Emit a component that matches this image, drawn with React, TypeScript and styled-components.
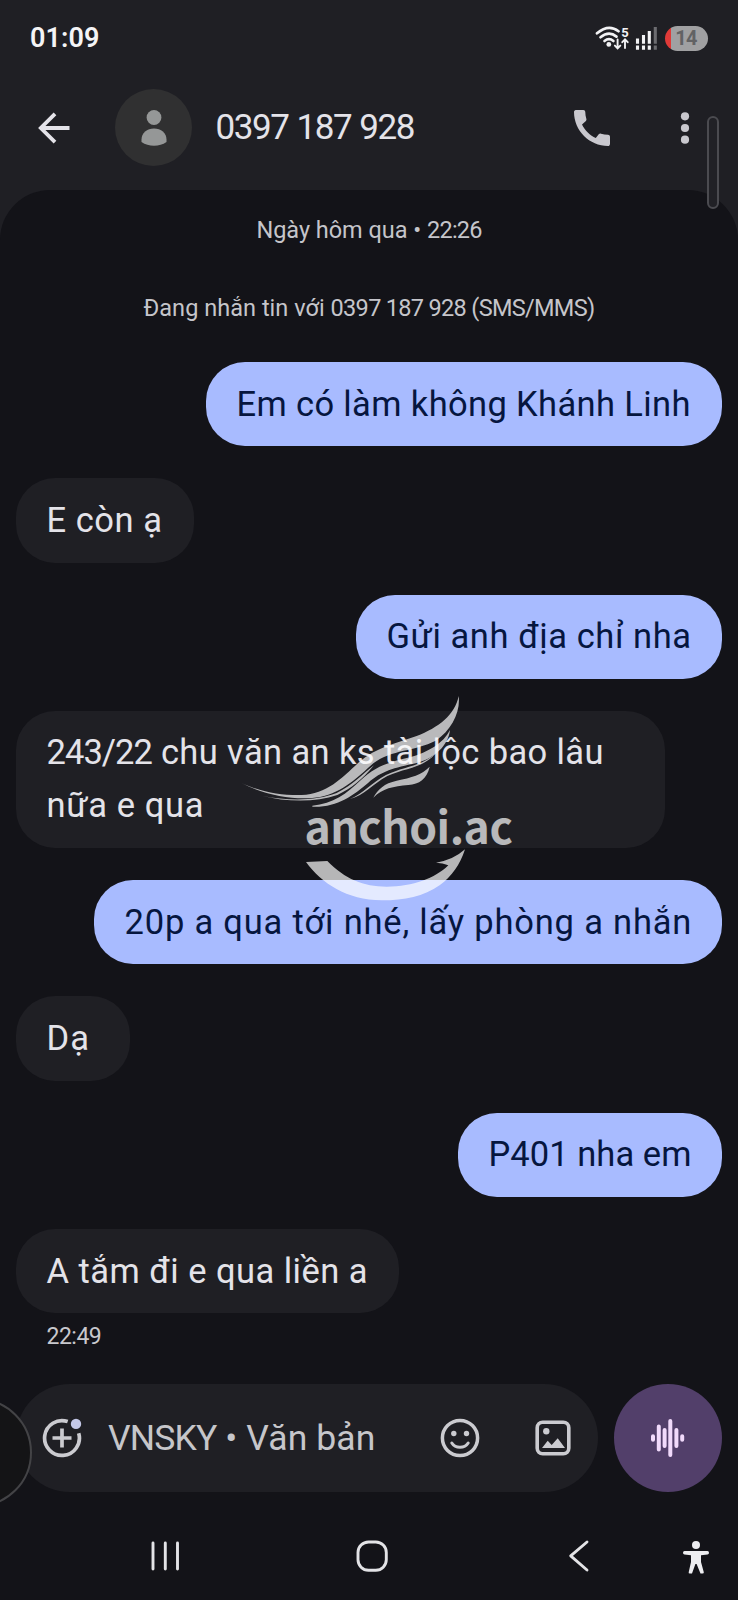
import React from 'react';
import styled, { createGlobalStyle } from 'styled-components';

const GlobalStyle = createGlobalStyle`
  * { box-sizing: border-box; }
  body { margin: 0; background: #131318; }
  svg { display: block; flex: none; }
`;

const Screen = styled.div`
  position: relative;
  display: flex;
  flex-direction: column;
  width: 738px;
  height: 1600px;
  overflow: hidden;
  background: #1f1f24;
  color: #e4e3e9;
  font-family: Roboto, 'Liberation Sans', sans-serif;
  white-space: nowrap;
`;

const StatusBar = styled.div`
  display: flex;
  align-items: center;
  justify-content: space-between;
  height: 76px;
  padding: 0 30.5px 0 30px;
`;

const Clock = styled.span`
  font-size: 27px;
  font-weight: 600;
  letter-spacing: 0.1px;
  color: #f4f4f6;
`;

const StatusIcons = styled.div`
  display: flex;
  align-items: center;
`;

const Battery = styled.div`
  display: flex;
  align-items: center;
  justify-content: center;
  width: 43px;
  height: 25px;
  margin-left: 6px;
  border-radius: 13px;
  background: linear-gradient(90deg, #e03a38 6px, #a0a0a2 6px);
  color: #626264;
  font-size: 20px;
  font-weight: 700;
  letter-spacing: -0.8px;
`;

const Header = styled.header`
  display: flex;
  align-items: center;
  height: 113.5px;
  padding: 0 16px 10px 36px;
`;

const Avatar = styled.div`
  display: flex;
  align-items: center;
  justify-content: center;
  width: 77px;
  height: 77px;
  margin: 0 23.5px 0 43px;
  border-radius: 50%;
  background: #303031;
`;

const Title = styled.h1`
  flex: 1;
  margin: 0;
  font-size: 35px;
  font-weight: 400;
  letter-spacing: -1.45px;
  word-spacing: 0.9px;
`;

const Thread = styled.main`
  display: flex;
  flex-direction: column;
  flex: 1;
  padding: 23px 16px 0;
  border-radius: 50px 50px 0 0;
  background: #131318;
`;

const Note = styled.div<{ $gap: number }>`
  height: 34px;
  margin-bottom: ${p => p.$gap}px;
  line-height: 34px;
  text-align: center;
  font-size: 23.5px;
  color: #c5c5ca;
`;

const Run = styled.span<{ $tracking: number }>`
  letter-spacing: ${p => p.$tracking}px;
`;

const Messages = styled.div`
  display: flex;
  flex-direction: column;
  gap: 32px;
`;

const Bubble = styled.div<{ $mine?: boolean; $width: number; $tracking: number }>`
  align-self: ${p => (p.$mine ? 'flex-end' : 'flex-start')};
  width: ${p => p.$width}px;
  padding: 15.65px 0 15.65px 30.5px;
  border-radius: 39px;
  background: ${p => (p.$mine ? '#a8bbff' : '#1f1f24')};
  color: ${p => (p.$mine ? '#06163f' : '#e4e3e9')};
  font-size: 34.5px;
  font-weight: 370;
  line-height: 53px;
  letter-spacing: ${p => p.$tracking}px;
`;

const Stamp = styled.div`
  margin: 6.5px 0 0 30.5px;
  font-size: 23px;
  line-height: 34px;
  letter-spacing: -0.5px;
  color: #c8c8cd;
`;

const Footer = styled.footer`
  display: flex;
  align-items: center;
  justify-content: space-between;
  height: 108px;
  margin: 0 16px 0 16px;
`;

const Composer = styled.div`
  display: flex;
  align-items: center;
  width: 582px;
  height: 108px;
  padding: 0 27px 0 26px;
  border-radius: 54px;
  background: #1f1f24;
`;

const Placeholder = styled.span`
  flex: 1;
  margin-left: 26px;
  font-size: 35.5px;
  font-weight: 370;
  color: #c6c6ca;
`;

const VoiceButton = styled.button`
  display: flex;
  align-items: center;
  justify-content: center;
  width: 108px;
  height: 108px;
  padding: 0;
  border: 0;
  border-radius: 50%;
  background: #523f6a;
`;

const Bottom = styled.div`
  display: flex;
  flex-direction: column;
  height: 216px;
  background: #131318;
`;

const NavBar = styled.nav`
  display: flex;
  align-items: center;
  height: 108px;
  padding: 19px 27px 0 149px;
`;

const Spacer = styled.div<{ $w: number }>`
  width: ${p => p.$w}px;
`;

const ScrollHandle = styled.div`
  position: absolute;
  left: 707px;
  top: 116px;
  width: 12px;
  height: 93px;
  border: 2px solid #4b4b50;
  border-radius: 6px;
  background: #212126;
`;

const EdgeHandle = styled.div`
  position: absolute;
  left: -77px;
  top: 1398px;
  width: 109px;
  height: 109px;
  border: 2px solid #434346;
  border-radius: 50%;
  background: #141416;
`;

const Watermark = styled.div`
  position: absolute;
  left: 230px;
  top: 680px;
  width: 300px;
  height: 240px;
  opacity: 0.69;
  color: #fff;
`;

const WatermarkText = styled.div`
  position: absolute;
  left: 74.5px;
  top: 114.5px;
  font: 700 44.5px/60px 'Noto Sans CJK SC', 'Noto Sans', sans-serif;
  letter-spacing: -0.5px;
`;

const Wifi = () => (
  <svg width="34" height="28" viewBox="595 24 34 28" fill="none" stroke="#f2f2f4" strokeWidth="2.7" strokeLinecap="round">
    <path d="M597 33.3Q608.5 23.5 618.5 31.2" />
    <path d="M600.5 37.2Q609 30.3 616.5 36.6" />
    <path d="M604.5 41Q609 37.4 613.4 41" />
    <circle cx="608.8" cy="44.4" r="2.4" fill="#f2f2f4" stroke="none" />
    <path d="M617.6 39.5V48M614.9 45.6l2.7 2.8 2.7-2.8M625 48V39.6M622.3 42.2l2.7-2.8 2.7 2.8" strokeWidth="1.9" />
    <text x="621.2" y="36.5" fontSize="13" fontWeight="700" fill="#f2f2f4" stroke="none">5</text>
  </svg>
);

const Signal = () => (
  <svg width="24" height="28" viewBox="635 24 24 28" strokeWidth="3.1" stroke="#f2f2f4">
    <path d="M637.5 38.5V43.8M643.5 35V43.8M649.3 31V43.8" />
    <path d="M637.5 45.6V49.8M643.5 45.6V49.8M649.3 45.6V49.8" />
    <path d="M655.3 27V43.8M655.3 45.6V49.8" stroke="#6c6c70" />
  </svg>
);

export default function App() {
  return (
    <Screen>
      <GlobalStyle />
      <StatusBar>
        <Clock>01:09</Clock>
        <StatusIcons>
          <Wifi />
          <Spacer $w={6} />
          <Signal />
          <Battery>14</Battery>
        </StatusIcons>
      </StatusBar>

      <Header>
        <svg width="36" height="36" viewBox="0 0 36 36" fill="none" stroke="#e4e3e9" strokeWidth="3.8">
          <path d="M33.500 18H5.500M19 3.800L4.800 18l14.200 14.200" />
        </svg>
        <Avatar>
          <svg width="26" height="38" viewBox="0 0 26 38" fill="#959797">
            <circle cx="13" cy="8.500" r="7.400" />
            <path d="M.5 33V30.500C.5 24 6 19.500 13 19.500S25.500 24 25.500 30.500V33Q20 36.800 13 36.800T.5 33Z" />
          </svg>
        </Avatar>
        <Title>0397 187 928</Title>
        <svg width="36" height="36" viewBox="3 3 18 18" fill="#c9c8ce">
          <path d="M20.010 15.380c-1.230 0-2.420-.200-3.530-.560-.350-.120-.740-.030-1.010.240l-1.570 1.970c-2.830-1.350-5.480-3.900-6.890-6.830l1.950-1.660c.270-.280.350-.670.240-1.020-.370-1.110-.560-2.300-.560-3.530 0-.540-.450-.990-.990-.990H4.190C3.650 3 3 3.240 3 3.990 3 13.280 10.730 21 20.010 21c.710 0 .990-.630.990-1.180v-3.450c0-.540-.450-.990-.990-.990z" />
        </svg>
        <Spacer $w={70} />
        <svg width="10" height="34" viewBox="0 0 10 34" fill="#c9c8ce">
          <circle cx="5" cy="5.300" r="4.100" />
          <circle cx="5" cy="17" r="4.100" />
          <circle cx="5" cy="28.700" r="4.100" />
        </svg>
        <Spacer $w={32} />
      </Header>

      <Thread>
        <Note $gap={44}>
          <Run $tracking={-0.02}>Ngày hôm qua • </Run>
          <Run $tracking={-0.8}>22:26</Run>
        </Note>
        <Note $gap={37.500}>
          <Run $tracking={0.03}>Đang nhắn tin với </Run>
          <Run $tracking={-0.68}>0397 187 928 (SMS/MMS)</Run>
        </Note>
        <Messages>
          <Bubble $mine $width={516} $tracking={0.36}>Em có làm không Khánh Linh</Bubble>
          <Bubble $width={177.500} $tracking={0.55}>E còn ạ</Bubble>
          <Bubble $mine $width={366} $tracking={0.56}>Gửi anh địa chỉ nha</Bubble>
          <Bubble $width={649} $tracking={0.38}>
            <Run $tracking={-0.95}>243/22</Run> chu văn an ks tài lộc bao lâu
            <br />
            <Run $tracking={0.62}>nữa e qua</Run>
          </Bubble>
          <Bubble $mine $width={628} $tracking={0.8}>20p a qua tới nhé, lấy phòng a nhắn</Bubble>
          <Bubble $width={114} $tracking={1}>Dạ</Bubble>
          <Bubble $mine $width={264} $tracking={0.05}>P401 nha em</Bubble>
          <Bubble $width={382.500} $tracking={0.46}>A tắm đi e qua liền a</Bubble>
        </Messages>
        <Stamp>22:49</Stamp>
      </Thread>

      <Bottom>
        <Footer>
          <Composer>
            <svg width="40" height="40" viewBox="0 0 40 40" fill="none" stroke="#cbcbd0" strokeWidth="3.700">
              <path d="M25.700 3.600A17.400 17.400 0 1 0 36.700 15.200M20 10.500V29.500M10.500 20H29.500" />
              <circle cx="34" cy="5.900" r="5.200" fill="#c4c8e8" stroke="none" />
            </svg>
            <Placeholder>
              <Run $tracking={-0.85}>VNSKY</Run>
              <Run $tracking={0.12}> • Văn bản</Run>
            </Placeholder>
            <svg width="40" height="40" viewBox="0 0 40 40" fill="none" stroke="#cbcbd0" strokeWidth="3.500">
              <circle cx="20" cy="20" r="17.600" />
              <path d="M11.800 25Q14.500 29.300 20 29.300T28.200 25" strokeWidth="3" strokeLinecap="round" />
              <circle cx="13.800" cy="15.500" r="2.700" fill="#cbcbd0" stroke="none" />
              <circle cx="26.500" cy="15.500" r="2.700" fill="#cbcbd0" stroke="none" />
            </svg>
            <Spacer $w={55} />
            <svg width="36" height="36" viewBox="0 0 36 36" fill="none" stroke="#cbcbd0" strokeWidth="3.600">
              <rect x="2.200" y="2.200" width="31.600" height="31.600" rx="5.500" />
              <circle cx="11.300" cy="11.300" r="3.200" fill="#cbcbd0" stroke="none" />
              <path d="M7 28L12.700 20.700L16.700 25L22.700 18.300L30 28Z" fill="#cbcbd0" stroke="none" />
            </svg>
          </Composer>
          <VoiceButton aria-label="Voice">
            <svg width="40" height="40" viewBox="0 0 40 40" stroke="#f1dafb" strokeWidth="4" strokeLinecap="round">
              <path d="M5 18.300V21.700M10.800 8.500V31.500M16.600 12V28M22.300 3V37M28.400 12V28M34.200 18.300V21.700" />
            </svg>
          </VoiceButton>
        </Footer>
        <NavBar>
          <svg width="32" height="32" viewBox="0 0 32 32" stroke="#e3e3e6" strokeWidth="2.900" strokeLinecap="round">
            <path d="M4 3V29M16.300 3V29M28.500 3V29" />
          </svg>
          <Spacer $w={174} />
          <svg width="34" height="34" viewBox="0 0 34 34" fill="none" stroke="#e3e3e6" strokeWidth="2.900">
            <rect x="3" y="3" width="28.300" height="28.300" rx="10.500" />
          </svg>
          <Spacer $w={178} />
          <svg width="24" height="34" viewBox="0 0 24 34" fill="none" stroke="#e3e3e6" strokeWidth="2.900" strokeLinecap="round" strokeLinejoin="round">
            <path d="M20 3L3.700 16.800L20 31" />
          </svg>
          <Spacer $w={91} />
          <svg width="28" height="36" viewBox="0 0 28 36" fill="#ededf0">
            <circle cx="14" cy="7" r="4" />
            <path d="M2.500 13H25.500Q27 13 27 14.700T25.500 16.500L19 17.300V24L21.800 34.300Q22 35.500 20.500 35.500H18.500L14.600 26H13.400L10 35.500H7.800Q6.300 35.500 6.700 34.300L9 24V17.300L2.500 16.500Q1 16.300 1 14.700T2.500 13Z" />
          </svg>
        </NavBar>
      </Bottom>

      <ScrollHandle />
      <EdgeHandle />
      <Watermark>
        <svg width="300" height="240" viewBox="0 0 900 720" fill="#fff">
          <path d="M32 308C100 338 150 346 215 345C290 342 335 295 385 248C440 200 500 190 560 168C625 143 675 105 686 48C692 95 665 150 617 182C555 214 485 208 430 250C385 290 340 337 270 351C200 362 110 348 32 308Z" />
          <path d="M95 347C180 364 260 362 320 339C370 314 395 284 432 256C395 300 365 325 322 345C255 368 170 366 95 347Z" />
          <path d="M247 377C310 372 350 341 392 301C435 258 480 246 540 232C595 216 640 190 660 150C655 195 615 235 560 249C490 264 455 273 415 308C370 347 320 383 247 380Z" />
          <path d="M360 357C400 340 425 309 468 285C520 260 570 260 615 222C580 264 525 264 472 288C425 314 405 345 360 357Z" />
          <path d="M430 353C443 328 463 310 500 302C545 293 575 284 599 260C590 298 568 312 535 315C490 319 457 325 430 353Z" />
          <path d="M228 546L292 543C345 597 400 620 470 620C550 620 615 595 655 556Q638 549 618 548Q670 540 705 508C690 555 665 590 630 615C580 650 525 661 455 661C350 660 275 610 228 546Z" />
        </svg>
        <WatermarkText>anchoi.ac</WatermarkText>
      </Watermark>
    </Screen>
  );
}
